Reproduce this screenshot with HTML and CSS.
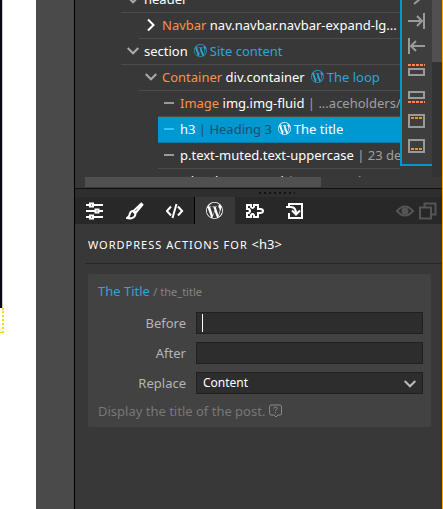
FILE: index.html
```html
<!DOCTYPE html>
<html lang="en">
<head>
<meta charset="utf-8">
<title>Page editor</title>
<link rel="stylesheet" href="styles.css">
</head>
<body>
<svg class="defs" aria-hidden="true">
  <symbol id="wp" viewBox="0 0 24 24"><path fill="currentColor" d="M12 0a12 12 0 1 0 0 24 12 12 0 0 0 0-24zm0 1.2c2.8 0 5.400 1.100 7.300 2.800h-.1c-1.100 0-1.800.9-1.800 1.900 0 .9.500 1.600 1.100 2.600.400.700.900 1.600.900 3 0 .9-.3 2.100-.8 3.600l-1.100 3.500-3.800-11.400 1.200-.1c.6-.1.500-.9 0-.9 0 0-1.700.1-2.800.1-1 0-2.800-.1-2.800-.1-.6 0-.6.8-.1.900l1.200.1 1.600 4.500-2.300 6.900L5.900 7.200l1.200-.1c.6-.1.500-.9-.1-.9 0 0-1.700.1-2.700.1H3.500A10.800 10.800 0 0 1 12 1.200zM1.200 12c0-1.600.3-3.100.9-4.400l5.200 14.100A10.800 10.800 0 0 1 1.200 12zM12 22.800c-1.100 0-2.100-.2-3-.4l3.200-9.500 3.300 9.100.1.100c-1.100.4-2.300.7-3.600.7zm5.400-1.500 3.300-9.500c.6-1.600.8-2.800.8-3.900V6.900A10.800 10.800 0 0 1 17.400 21.300z"/></symbol>
  <symbol id="down" viewBox="0 0 12 8"><path fill="none" stroke="currentColor" stroke-width="2" d="M.7 1 6 6.300 11.300 1"/></symbol>
</svg>
<div class="app">
  <div class="page"><div class="photo"></div><div class="outline"></div></div>
  <div class="gutter"></div>
  <main class="panel">
    <section class="tree-area">
      <ul class="tree">
        <li class="row"><svg class="arrow"><use href="#down"/></svg><span>header</span></li>
        <li class="row l2"><svg class="arrow right" viewBox="0 0 12 14"><path d="M3 1.500 8.500 7 3 12.500"/></svg><span><b>Navbar</b> nav.navbar.navbar-expand-lg...</span></li>
        <li class="row"><svg class="arrow"><use href="#down"/></svg><span>section</span><svg class="wp"><use href="#wp"/></svg><em>Site content</em></li>
        <li class="row l2"><svg class="arrow"><use href="#down"/></svg><span><b>Container</b> div.container</span><svg class="wp"><use href="#wp"/></svg><em>The loop</em></li>
        <li class="row l3"><i class="dash"></i><span><b>Image</b> img.img-fluid <small>| ...aceholders/img</small></span></li>
        <li class="row l3 selected"><i class="dash"></i><span>h3 <small>| Heading 3</small></span><svg class="wp"><use href="#wp"/></svg><em>The title</em></li>
        <li class="row l3"><i class="dash"></i><span>p.text-muted.text-uppercase <small>| 23 december</small></span></li>
        <li class="row l3"><i class="dash"></i><span>a.btn.btn-normal <small>| see more here</small></span></li>
      </ul>
      <div class="hscroll"><div class="hthumb"></div></div>
      <div class="vscroll"><div class="vthumb"></div></div>
      <div class="tools">
        <button aria-label="Insert before"><svg viewBox="0 0 18 18"><path d="M6 17l6-5"/></svg></button>
        <button aria-label="Move right"><svg viewBox="0 0 18 18"><path d="M0 9h14M9 4l5 5-5 5M16 1v16"/></svg></button>
        <button aria-label="Move left"><svg viewBox="0 0 18 18"><path d="M17 9H3M8 4 3 9l5 5M1 1v16"/></svg></button>
        <button aria-label="Place before"><svg viewBox="0 0 18 18"><path d="M1 7h15v6H1z"/><path class="hot" d="M0 3h17"/></svg></button>
        <button aria-label="Place after"><svg viewBox="0 0 18 18"><path d="M1 5h15v6H1z"/><path class="hot" d="M0 15h17"/></svg></button>
        <button aria-label="Place first"><svg viewBox="0 0 18 18"><path d="M1 3h15v12H1z"/><path class="hot" d="M3 6h12"/></svg></button>
        <button aria-label="Place last"><svg viewBox="0 0 18 18"><path d="M1 3h15v12H1z"/><path class="hot" d="M3 12h12"/></svg></button>
      </div>
    </section>
    <div class="splitter"><div class="grip"></div></div>
    <nav class="tabs">
      <button aria-label="Settings"><svg viewBox="0 0 18 18"><path d="M0 3h4M7 3h10M0 9h9M13 9h4M0 15h4M7 15h10M4 1.500h3v3H4zM9.500 7.500h3v3h-3zM4 13.500h3v3H4z"/></svg></button>
      <button aria-label="Style"><svg viewBox="0 0 18 18"><path d="M16 1 8 8.500l2 2L17 2M7 9c-3 0-3 2-3.500 4S2 15.500 1 16c4 1 8 0 8.500-4z"/></svg></button>
      <button aria-label="Code"><svg viewBox="0 0 18 18"><path d="M5 4.500.9 9 5 13.500M12 4.500 16.100 9 12 13.500M10.500 2l-4 14"/></svg></button>
      <button class="active" aria-label="WordPress"><svg viewBox="0 0 18 18"><use href="#wp" x="0" y="0" width="17" height="17"/></svg></button>
      <button aria-label="Components"><svg viewBox="0 0 18 18"><path d="M1 3h4v2q1.500 2 3 0V3h4v4h2q3 0 3 2t-3 2h-2v4H8v-2q-1.500-2-3 0v2H1v-4h2q2-2 0-4H1z"/></svg></button>
      <button aria-label="Import"><svg viewBox="0 0 18 18"><path d="M3 4V2h13v14H3v-5M0 5h5q5 0 5 7M6 8.500l4 4 4-4"/></svg></button>
      <div class="views">
        <svg viewBox="0 0 18 18"><path d="M1 9q8-9 16 0-8 9-16 0z"/><circle cx="9" cy="9" r="2.500" fill="currentColor"/></svg>
        <svg viewBox="0 0 18 18"><path d="M5.500 5V1.500h11v11H12M1 5.500h11v11H1z"/></svg>
      </div>
    </nav>
    <h1 class="heading">WORDPRESS ACTIONS FOR <span>&lt;h3&gt;</span></h1>
    <form class="card">
      <h2><a href="#">The Title</a> <small>/ the_title</small></h2>
      <div class="field"><label for="before">Before</label><input id="before" type="text"><span class="caret"></span></div>
      <div class="field"><label for="after">After</label><input id="after" type="text"></div>
      <div class="field"><label for="replace">Replace</label><select id="replace"><option>Content</option></select><svg class="drop"><use href="#down"/></svg></div>
      <p>Display the title of the post. <svg viewBox="0 0 14 14"><path d="M2 1h9q1.500 0 1.500 1.500v7q0 1.500-1.500 1.500H9l-2 2-2-2H2Q.6 11 .6 9.500v-7Q.6 1 2 1zM4.800 4.500q0-1.500 1.700-1.500t1.700 1.500q0 .8-1.700 1.800v.7M6.500 8v1.300"/></svg></p>
    </form>
  </main>
</div>
</body>
</html>
```
FILE: styles.css
```css
* { box-sizing: border-box; }
body { margin: 0; font: 13px/18px "Noto Sans", sans-serif; color: #fff; background: #383838; }
.defs { position: absolute; width: 0; height: 0; }
button { border: 0; padding: 0; background: none; color: inherit; display: flex; align-items: center; justify-content: center; }
svg { flex: none; }
.app { display: flex; min-height: 100vh; }
.page { flex: 0 0 36px; background: #fff; }
.photo { width: 3px; height: 308px; background: #0c0710; border-right: 1px solid #ccc; }
.outline { width: 4px; height: 25px; border-right: 2px dotted #fd0; border-bottom: 1px dotted #fd0; }
.gutter { flex: 0 0 39px; background: #4a4a4a; border-right: 1px solid #000; }
.panel { flex: 1; min-width: 0; background: #383838; border-right: 1px solid #fcb000; }
.tree-area { position: relative; height: 189px; overflow: hidden; border-bottom: 1px solid #111; }
.tree { list-style: none; margin: 0; padding: 0 42px 0 46px; height: 177px; overflow: hidden; display: flex; flex-direction: column; }
.row { flex: none; height: 26px; display: flex; align-items: center; border-bottom: 1px solid #4c4c4c; padding: 0 0 2px 6px; white-space: nowrap; overflow: hidden; }
.row:first-child { height: 13px; align-items: flex-end; }
.row:first-child span { margin-bottom: 2px; }
.row:first-child .arrow { margin-bottom: 6px; }
.l2 { margin-left: 18px; }
.l3 { margin-left: 37px; }
.arrow { width: 12px; height: 8px; margin-right: 5px; color: #aaa; }
.right { height: 14px; fill: none; stroke: #fff; stroke-width: 2; }
.row b { font-weight: 400; color: #f8924c; }
.row em { font-style: normal; color: #2fa4d8; }
.row small { font-size: 13px; color: #a0a0a0; }
.wp { width: 13px; height: 13px; margin: 0 3px 0 6px; color: #2fa4d8; }
.dash { flex: none; width: 10px; height: 2px; background: #999; margin-right: 6px; }
.selected { background: #0098d0; border-color: #087cae; }
.selected em, .selected .wp { color: #fff; }
.selected small { color: #15526d; }
.selected .dash { background: #32c5ff; }
.hscroll { padding-left: 10px; }
.hthumb { width: 236px; height: 10px; background: #505050; }
.vscroll { position: absolute; top: 0; right: 0; width: 10px; height: 177px; background: #333; }
.vthumb { height: 62px; background: #505050; }
.tools { position: absolute; top: -17px; right: 10px; width: 32px; height: 183px; background: #3e3e3e; border: solid #0098d0; border-width: 0 0 2px 2px; color: #9a9a9a; display: flex; flex-direction: column; }
.tools button { height: 25px; }
.tools svg { width: 18px; height: 18px; fill: none; stroke: currentColor; stroke-width: 2; }
.tools .hot { stroke: #ff8840; stroke-dasharray: 3 1; }
.splitter { height: 8px; background: #2e2e2e; display: flex; justify-content: center; align-items: center; }
.grip { width: 36px; height: 2px; margin-left: 36px; background: repeating-linear-gradient(90deg, #111 0 2px, transparent 2px 5px); }
.tabs { height: 27px; background: #282828; display: flex; }
.tabs button { width: 40px; }
.tabs svg { width: 18px; height: 18px; fill: none; stroke: currentColor; stroke-width: 2; }
.tabs .active { background: #383838; box-shadow: -1px 0 #000; }
.tabs .active svg { stroke: none; }
.views { margin-left: auto; display: flex; align-items: center; gap: 5px; padding-right: 5px; color: #555; }
.heading { font-size: 11px; line-height: 18px; font-weight: 400; letter-spacing: 1px; margin: 0 0 10px 10px; padding: 11px 3px 9px; border-bottom: 1px solid #282828; }
.heading span { font-size: 13px; letter-spacing: 0; }
.card { margin: 0 11px 0 13px; height: 153px; padding: 8px 8px 0 10px; background: #424242; border-radius: 2px; }
.card h2 { font-size: 13px; line-height: 18px; font-weight: 400; margin: 0 0 11px; }
.card a { color: #2fa4d8; text-decoration: none; }
.card small { font-size: 11px; color: #858585; }
.field { position: relative; display: grid; grid-template-columns: 88px 1fr; column-gap: 10px; align-items: center; margin-bottom: 8px; color: #b5b5b5; }
.field label { text-align: right; }
.field input, .field select { width: 100%; height: 22px; min-width: 0; border: 1px solid #202020; border-radius: 0; background: #2d2d2d; color: #fff; font: inherit; font-size: 12px; padding: 0 6px; outline: 0; appearance: none; }
.caret { position: absolute; left: 104px; top: 2px; width: 1px; height: 18px; background: #fff; }
.drop { position: absolute; right: 7px; top: 8px; width: 12px; height: 8px; color: #bbb; }
.card p { margin: 0; color: #777; display: flex; align-items: center; gap: 4px; }
.card p svg { width: 14px; height: 14px; fill: none; stroke: #8a8a8a; }
```
